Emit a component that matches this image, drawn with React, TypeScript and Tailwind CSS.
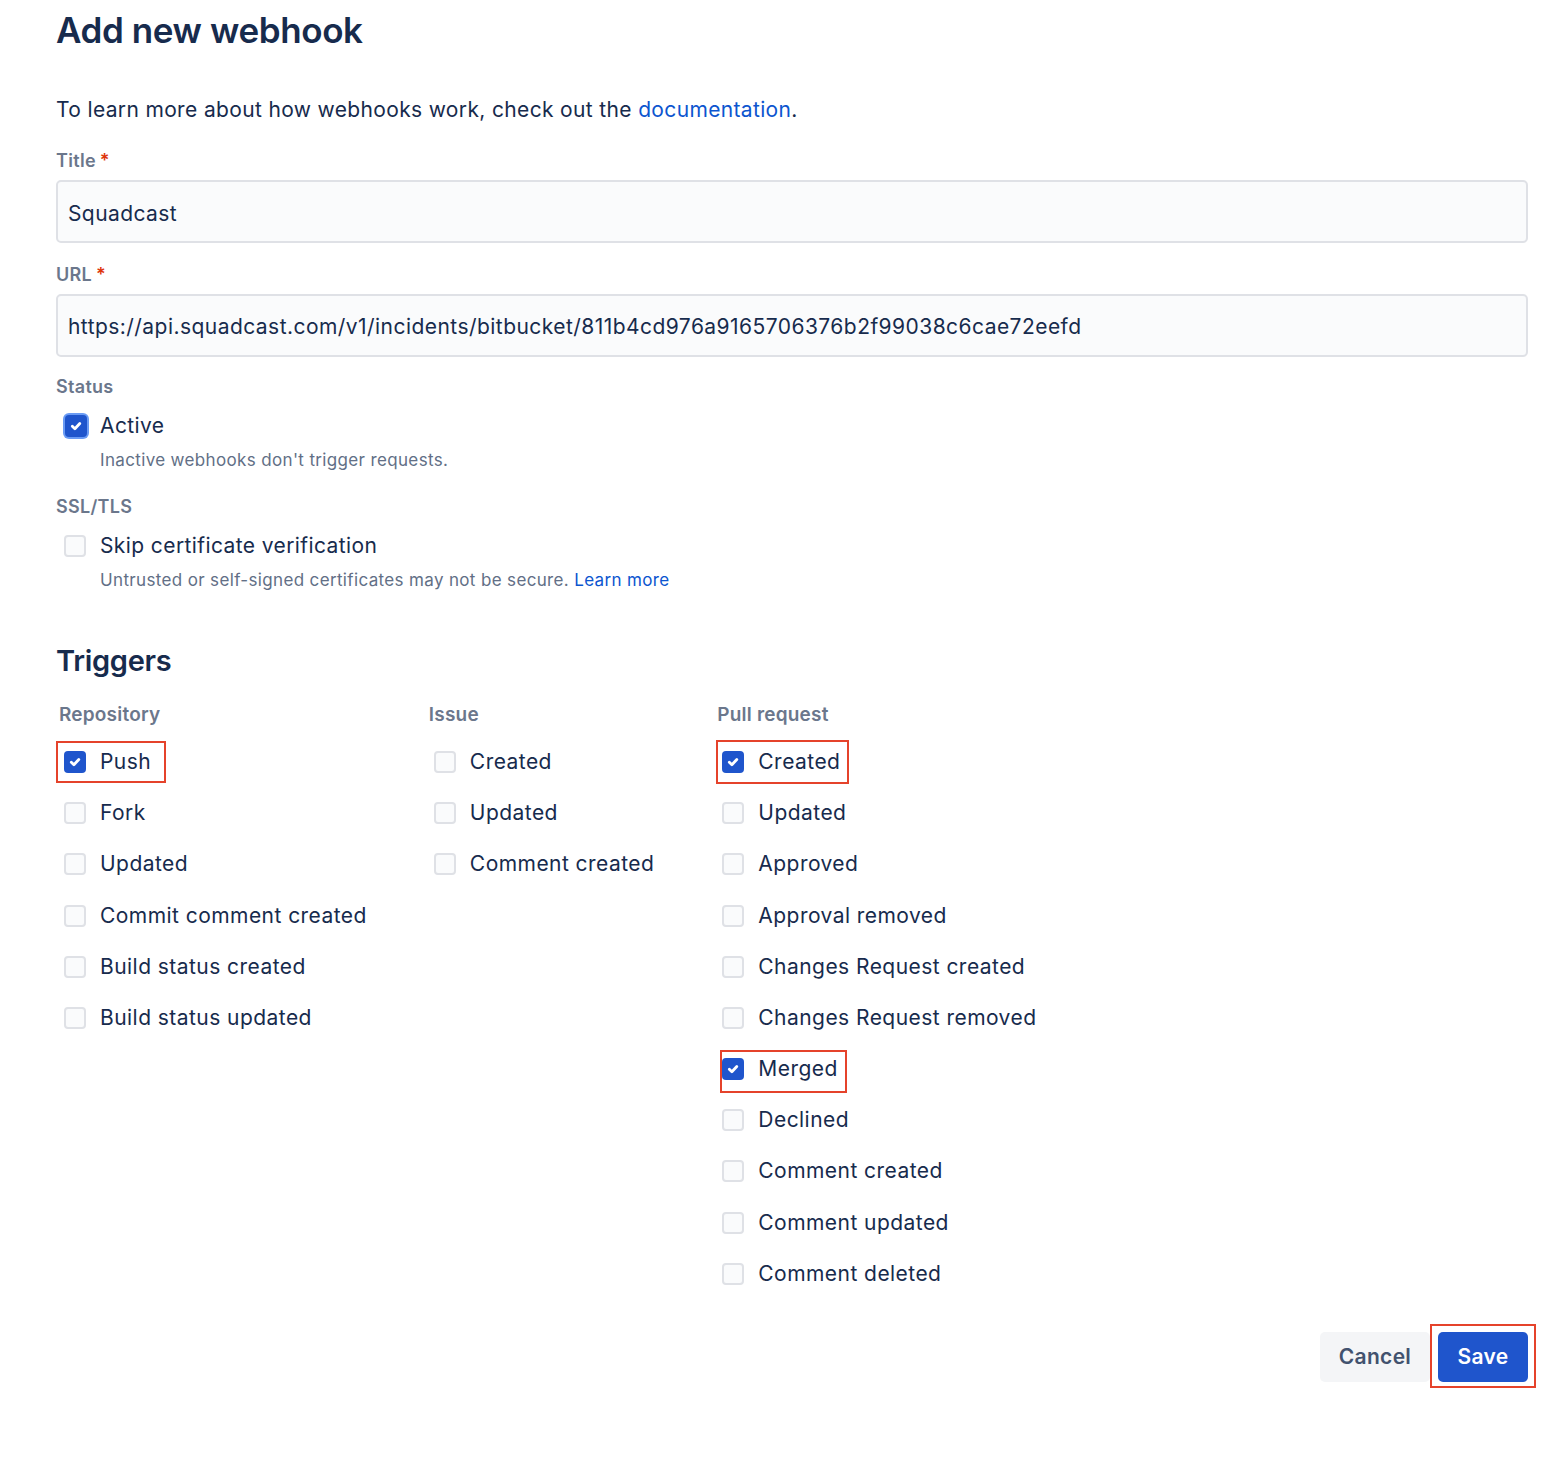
import React from "react";

const F = { fontFamily: "Inter, 'Noto Sans', sans-serif" };

function Box({ checked, focus }: { checked?: boolean; focus?: boolean }) {
  if (checked) {
    return (
      <span
        className={
          "flex h-[22px] w-[22px] shrink-0 items-center justify-center rounded-[4px] bg-[#1f55cc] " +
          (focus ? "ring-2 ring-[#6a9bf4]" : "")
        }
      >
        <svg width="14" height="14" viewBox="0 0 14 14">
          <path d="M3.3 7.2 L5.9 9.8 L10.8 4.5" fill="none" stroke="#fff" strokeWidth="2.8" strokeLinecap="round" strokeLinejoin="round" />
        </svg>
      </span>
    );
  }
  return <span className="block h-[22px] w-[22px] shrink-0 rounded-[4px] border-2 border-[#dfe1e6] bg-[#fafbfc]" />;
}

type Item = { label: string; checked?: boolean; hl?: string };

function Row({ item }: { item: Item }) {
  return (
    <div className="flex h-[51.2px] items-center">
      <div className="relative flex items-center pl-[8px]">
        <Box checked={item.checked} />
        <span className="ml-[14px] text-[21px] leading-[28px] tracking-[0.45px] text-[#172b4d]">{item.label}</span>
        {item.hl && <span className={"pointer-events-none absolute border-2 border-[#e5432b] " + item.hl} />}
      </div>
    </div>
  );
}

function Col({ title, items, cls }: { title: string; items: Item[]; cls?: string }) {
  return (
    <div className={"flex flex-col " + (cls || "")}>
      <div className="h-[24px] pl-[3px] text-[19px] font-semibold leading-[24px] tracking-[0.2px] text-[#6b778c]">{title}</div>
      <div className="mt-[9.4px] flex flex-col">
        {items.map((it, i) => (
          <Row key={i} item={it} />
        ))}
      </div>
    </div>
  );
}

export default function App() {
  const repo: Item[] = [
    { label: "Push", checked: true, hl: "-left-[0px] -right-[15px] -top-[7px] -bottom-[7px]" },
    { label: "Fork" },
    { label: "Updated" },
    { label: "Commit comment created" },
    { label: "Build status created" },
    { label: "Build status updated" },
  ];
  const issue: Item[] = [{ label: "Created" }, { label: "Updated" }, { label: "Comment created" }];
  const pr: Item[] = [
    { label: "Created", checked: true, hl: "left-[2px] -right-[9px] -top-[8px] -bottom-[8px]" },
    { label: "Updated" },
    { label: "Approved" },
    { label: "Approval removed" },
    { label: "Changes Request created" },
    { label: "Changes Request removed" },
    { label: "Merged", checked: true, hl: "left-[6px] -right-[9px] -top-[5px] -bottom-[10px]" },
    { label: "Declined" },
    { label: "Comment created" },
    { label: "Comment updated" },
    { label: "Comment deleted" },
  ];

  const label = "h-[24px] text-[18px] font-semibold leading-[24px] tracking-[0.3px] text-[#6b778c]";
  const help = "mt-[7px] h-[24px] pl-[44px] text-[17px] leading-[24px] tracking-[0.35px] text-[#626f86]";
  const input =
    "mt-[7px] flex h-[63px] items-center rounded-[5px] border-2 border-[#dfe1e6] bg-[#fafbfc] px-[10px] text-[21px] text-[#172b4d]";

  return (
    <div style={F} className="min-h-[1458px] w-[1568px] bg-white">
      <div className="flex flex-col pl-[56px]" style={{ width: 1528 }}>
        <h1 className="h-[60px] text-[35px] font-semibold leading-[60px] tracking-[-0.4px] text-[#172b4d]">Add new webhook</h1>
        <p className="mt-[35px] h-[30px] text-[21px] leading-[30px] tracking-[0.35px] text-[#172b4d]">
          To learn more about how webhooks work, check out the <span className="text-[#0c55cf]">documentation</span>.
        </p>

        <div className={"mt-[24px] " + label}>
          Title<span className="ml-[4px] text-[#de350b]">*</span>
        </div>
        <div className={input + " pt-[4px] tracking-[0.4px]"}>Squadcast</div>

        <div className={"mt-[20px] " + label}>
          URL<span className="ml-[4px] text-[#de350b]">*</span>
        </div>
        <div className={input + " pt-[2px] tracking-[0.45px]"}>
          https://api.squadcast.com/v1/incidents/bitbucket/811b4cd976a9165706376b2f99038c6cae72eefd
        </div>

        <div className={"mt-[18px] " + label}>Status</div>
        <div className="mt-[12px] flex h-[30px] items-center pl-[9px]">
          <Box checked focus />
          <span className="ml-[13px] text-[21px] tracking-[0.4px] text-[#172b4d]">Active</span>
        </div>
        <div className={help}>Inactive webhooks don't trigger requests.</div>

        <div className={"mt-[23px] " + label}>SSL/TLS</div>
        <div className="mt-[12px] flex h-[30px] items-center pl-[8px]">
          <Box />
          <span className="ml-[14px] text-[21px] tracking-[0.4px] text-[#172b4d]">Skip certificate verification</span>
        </div>
        <div className={help}>
          Untrusted or self-signed certificates may not be secure. <span className="text-[#0c55cf]">Learn more</span>
        </div>

        <h2 className="mt-[49px] h-[40px] text-[29px] font-semibold leading-[40px] tracking-[-0.3px] text-[#172b4d]">Triggers</h2>

        <div className="mt-[22px] flex">
          <Col title="Repository" items={repo} />
          <Col title="Issue" items={issue} cls="ml-[59px]" />
          <Col title="Pull request" items={pr} cls="ml-[60px]" />
        </div>

        <div className="mt-[32.4px] flex justify-end gap-[8px]">
          <button className="h-[50px] w-[110px] rounded-[5px] bg-[#f4f5f7] text-[21px] font-semibold tracking-[0.3px] text-[#42526e]">Cancel</button>
          <div className="relative">
            <button className="h-[50px] w-[90px] rounded-[5px] bg-[#1f55cc] text-[21px] font-semibold tracking-[0.3px] text-white">Save</button>
            <span className="pointer-events-none absolute -bottom-[6px] -left-[8px] -right-[8px] -top-[8px] border-2 border-[#e5432b]" />
          </div>
        </div>
      </div>
    </div>
  );
}
